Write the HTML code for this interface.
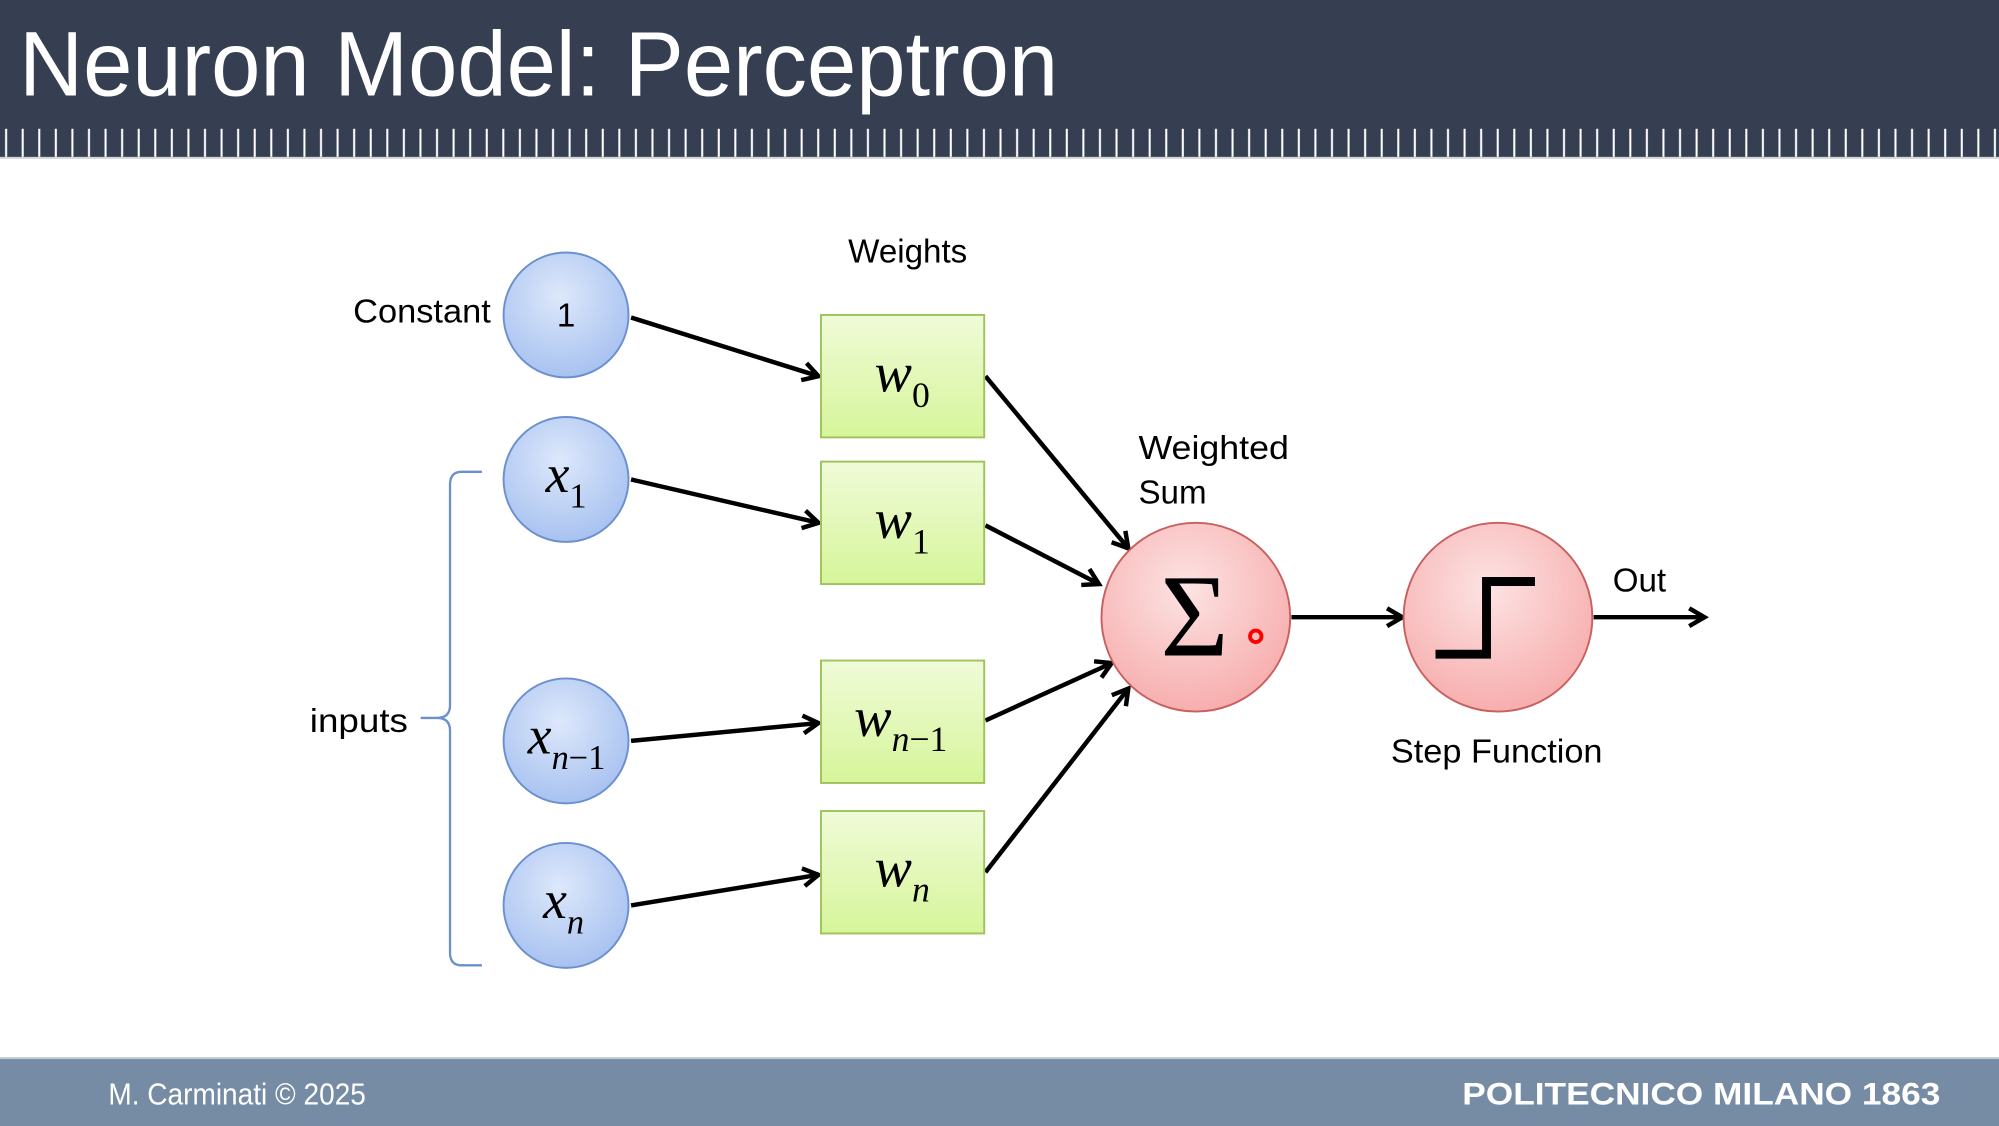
<!DOCTYPE html>
<html><head><meta charset="utf-8"><style>
html,body{margin:0;padding:0;background:#fff}
svg{display:block}
</style></head><body>
<svg width="1999" height="1126" viewBox="0 0 1568 883" preserveAspectRatio="none" xmlns="http://www.w3.org/2000/svg">
<defs>
<pattern id="tk" x="0" y="0" width="13" height="30" patternUnits="userSpaceOnUse"><rect x="4" y="0" width="1.6" height="30" fill="#fff"/></pattern>
<radialGradient id="bl" cx="45%" cy="35%" r="65%"><stop offset="0" stop-color="#dde8fb"/><stop offset="1" stop-color="#a8c2f0"/></radialGradient>
<radialGradient id="rd" cx="45%" cy="35%" r="65%"><stop offset="0" stop-color="#fde3e3"/><stop offset="1" stop-color="#f7aeae"/></radialGradient>
<linearGradient id="gr" x1="0" y1="0" x2="0" y2="1"><stop offset="0" stop-color="#f0fbd8"/><stop offset="1" stop-color="#d6f59a"/></linearGradient>
<marker id="ar" markerWidth="20" markerHeight="20" refX="15" refY="10" orient="auto" markerUnits="userSpaceOnUse"><polyline points="3,3 15,10 3,17" fill="none" stroke="#000" stroke-width="3.5"/></marker>
</defs>
<rect width="1568" height="124" fill="#363f51"/>
<rect x="0" y="101" width="1568" height="22" fill="url(#tk)"/>
<rect x="0" y="123" width="1568" height="1.5" fill="#cfd3da"/>
<text x="15" y="75" fill="#fff" font-family="Liberation Sans Narrow, Liberation Sans, sans-serif" font-size="72" textLength="815" lengthAdjust="spacingAndGlyphs">Neuron Model: Perceptron</text>

<g stroke="#000" stroke-width="3.5" fill="none" marker-end="url(#ar)">
<line x1="495" y1="249" x2="642" y2="295"/>
<line x1="495" y1="376" x2="642" y2="410"/>
<line x1="495" y1="581" x2="642" y2="567"/>
<line x1="495" y1="710" x2="642" y2="686"/>
<line x1="773" y1="295" x2="885" y2="430"/>
<line x1="773" y1="412" x2="862" y2="458"/>
<line x1="773" y1="565" x2="872" y2="520"/>
<line x1="773" y1="684" x2="885" y2="540"/>
<line x1="1013" y1="484" x2="1100" y2="484"/>
<line x1="1250" y1="484" x2="1337" y2="484"/>
</g>

<g fill="url(#bl)" stroke="#6b8fcf" stroke-width="1.5">
<circle cx="444" cy="247" r="49"/><circle cx="444" cy="376" r="49"/>
<circle cx="444" cy="581" r="49"/><circle cx="444" cy="710" r="49"/>
</g>
<g fill="url(#gr)" stroke="#9dc35a" stroke-width="1.5">
<rect x="644" y="247" width="128" height="96"/><rect x="644" y="362" width="128" height="96"/>
<rect x="644" y="518" width="128" height="96"/><rect x="644" y="636" width="128" height="96"/>
</g>
<g fill="url(#rd)" stroke="#c8605f" stroke-width="1.5">
<circle cx="938" cy="484" r="74"/><circle cx="1175" cy="484" r="74"/>
</g>
<path d="M1126 513 H1166 V456 H1204" fill="none" stroke="#000" stroke-width="7"/>
<circle cx="985" cy="499" r="4.5" fill="none" stroke="#f00" stroke-width="3"/>
<text x="937" y="514" text-anchor="middle" font-family="Liberation Serif, serif" font-size="92">Σ</text>

<path d="M378 370 H362 Q353 370 353 380 V553 Q353 563 343 563 H330 M343 563 Q353 563 353 573 V747 Q353 757 362 757 H378" fill="none" stroke="#6b8fcf" stroke-width="1.8"/>

<g font-family="Liberation Sans, sans-serif" font-size="26" fill="#000">
<text x="712" y="206" text-anchor="middle">Weights</text>
<text x="385" y="253" text-anchor="end" textLength="108" lengthAdjust="spacingAndGlyphs">Constant</text>
<text x="893" y="360" textLength="118" lengthAdjust="spacingAndGlyphs">Weighted</text>
<text x="893" y="395">Sum</text>
<text x="1265" y="464">Out</text>
<text x="1174" y="598" text-anchor="middle" textLength="166" lengthAdjust="spacingAndGlyphs">Step Function</text>
<text x="243" y="574" textLength="77" lengthAdjust="spacingAndGlyphs">inputs</text>
<text x="444" y="256" text-anchor="middle">1</text>
</g>
<g font-family="Liberation Serif, serif" fill="#000">
<text x="428" y="386" font-size="42" font-style="italic">x<tspan font-size="27" font-style="normal" dy="12">1</tspan></text>
<text x="414" y="591" font-size="42" font-style="italic">x<tspan font-size="27" dy="12">n</tspan><tspan font-size="27" font-style="normal">−1</tspan></text>
<text x="426" y="720" font-size="42" font-style="italic">x<tspan font-size="27" dy="12">n</tspan></text>
<text x="686" y="307" font-size="44" font-style="italic">w<tspan font-size="28" font-style="normal" dy="12">0</tspan></text>
<text x="686" y="422" font-size="44" font-style="italic">w<tspan font-size="28" font-style="normal" dy="12">1</tspan></text>
<text x="670" y="577" font-size="44" font-style="italic">w<tspan font-size="28" dy="12">n</tspan><tspan font-size="28" font-style="normal">−1</tspan></text>
<text x="686" y="695" font-size="44" font-style="italic">w<tspan font-size="28" dy="12">n</tspan></text>
</g>

<rect x="0" y="829" width="1568" height="1.5" fill="#c3c9d1"/>
<rect x="0" y="830.5" width="1568" height="53" fill="#768ca4"/>
<text x="85" y="866" fill="#fff" font-family="Liberation Sans Narrow, Liberation Sans, sans-serif" font-size="24" textLength="202" lengthAdjust="spacingAndGlyphs">M. Carminati © 2025</text>
<text x="1522" y="866" text-anchor="end" fill="#fff" font-family="Liberation Sans, sans-serif" font-weight="bold" font-size="25" textLength="375" lengthAdjust="spacingAndGlyphs">POLITECNICO MILANO 1863</text>
</svg>
</body></html>
